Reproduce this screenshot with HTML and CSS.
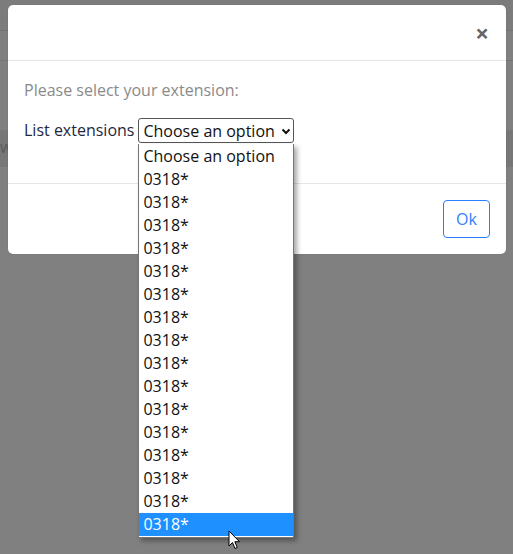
FILE: index.html
```html
<!DOCTYPE html>
<html>
<head>
<meta charset="utf-8">
<link rel="stylesheet" href="styles.css">
</head>
<body>
<div class="page">
  <div class="bar-top"></div>
  <div class="bar-sub"></div>
  <div class="gap-a"></div>
  <div class="band"><span class="band-text">w</span></div>
  <div class="rest"></div>
</div>

<div class="modal">
  <div class="modal-header">
    <span class="close">&times;</span>
  </div>
  <div class="modal-body">
    <p class="hint">Please select your extension:</p>
    <div class="field">
      <span class="label">List extensions</span>
      <div class="select-wrap">
        <div class="select">
          <span>Choose an option</span>
          <svg class="chev" width="10" height="7" viewBox="0 0 10 7"><path d="M1.5 1.5 L5 5 L8.5 1.5" fill="none" stroke="#111" stroke-width="2"/></svg>
        </div>
        <ul class="listbox">
          <li>Choose an option</li>
          <li>0318*</li>
          <li>0318*</li>
          <li>0318*</li>
          <li>0318*</li>
          <li>0318*</li>
          <li>0318*</li>
          <li>0318*</li>
          <li>0318*</li>
          <li>0318*</li>
          <li>0318*</li>
          <li>0318*</li>
          <li>0318*</li>
          <li>0318*</li>
          <li>0318*</li>
          <li>0318*</li>
          <li class="active">0318*</li>
        </ul>
        <svg class="cursor" width="14" height="21" viewBox="0 0 14 21"><path d="M1 1 L1 16 L4.5 12.5 L7 18.5 L9.3 17.5 L6.8 11.7 L11.5 11.7 Z" fill="#fff" stroke="#000" stroke-width="1" stroke-linejoin="round"/></svg>
      </div>
    </div>
  </div>
  <div class="modal-footer">
    <button class="btn">Ok</button>
  </div>
</div>
</body>
</html>
```

FILE: styles.css
```css
html, body {
  margin: 0;
  padding: 0;
}
body {
  width: 513px;
  height: 554px;
  overflow: hidden;
  background: #808080;
  font-family: "Open Sans", "Noto Sans", sans-serif;
  font-size: 16px;
  position: relative;
}
.page {
  display: flex;
  flex-direction: column;
  height: 554px;
}
.bar-top {
  height: 30px;
  background: #7c7c7c;
  border-bottom: 1px solid #727272;
}
.bar-sub {
  height: 29px;
  background: #808080;
  border-bottom: 1px solid #767676;
}
.gap-a {
  height: 69px;
}
.band {
  height: 36px;
  background: #777777;
  border-top: 1px solid #7a7a7a;
  position: relative;
}
.band-text {
  color: #5a5a5a;
  font-size: 16px;
  position: absolute;
  left: 0;
  top: 5px;
}
.rest {
  flex: 1;
}
.modal {
  position: absolute;
  left: 8px;
  top: 5px;
  width: 498px;
  background: #fff;
  border-radius: 5px;
  box-shadow: 0 0 1px rgba(0,0,0,0.3);
}
.modal-header {
  height: 56px;
  box-sizing: border-box;
  border-bottom: 1px solid #e6e6e6;
  display: flex;
  justify-content: flex-end;
  align-items: center;
  padding: 0 16px;
}
.close {
  font-size: 24px;
  font-weight: 700;
  color: #666;
  line-height: 1;
  margin-right: 1px;
  margin-top: 1px;
}
.modal-body {
  box-sizing: border-box;
  padding: 17px 16px 0 16px;
  height: 122px;
}
.hint {
  margin: 0 0 16px 0;
  color: #8a8a8a;
  line-height: 24px;
}
.field {
  display: flex;
  align-items: flex-start;
  height: 25px;
  color: #1f2740;
}
.label {
  margin-right: 4px;
  line-height: 25px;
}
.select-wrap {
  position: relative;
}
.select {
  width: 156px;
  height: 25px;
  box-sizing: border-box;
  border: 1px solid #555;
  border-radius: 3px;
  display: flex;
  align-items: center;
  justify-content: space-between;
  padding: 0 2px 0 4px;
  color: #111;
  background: #fff;
}
.chev {
  margin-top: 1px;
}
.listbox {
  position: absolute;
  left: 0;
  top: 26px;
  width: 156px;
  box-sizing: border-box;
  margin: 0;
  padding: 1px 0 1px 0;
  list-style: none;
  background: #fff;
  border: 1px solid #767676;
  border-top: none;
  box-shadow: 3px 3px 5px rgba(0,0,0,0.35);
  z-index: 2;
}
.listbox li {
  height: 23px;
  line-height: 23px;
  padding-left: 4px;
  color: #111;
}
.listbox li.active {
  background: #1e90ff;
  color: #fff;
}
.cursor {
  position: absolute;
  left: 90px;
  top: 412px;
  z-index: 3;
}
.modal-footer {
  border-top: 1px solid #e6e6e6;
  display: flex;
  justify-content: flex-end;
  padding: 16px 16px 16px 16px;
}
.btn {
  font-family: "Open Sans", "Noto Sans", sans-serif;
  font-size: 16px;
  line-height: 24px;
  color: #2f80ff;
  background: #fff;
  border: 1px solid #2a7fff;
  border-radius: 4px;
  padding: 6px 11px;
  width: 47px;
  height: 38px;
}
```
